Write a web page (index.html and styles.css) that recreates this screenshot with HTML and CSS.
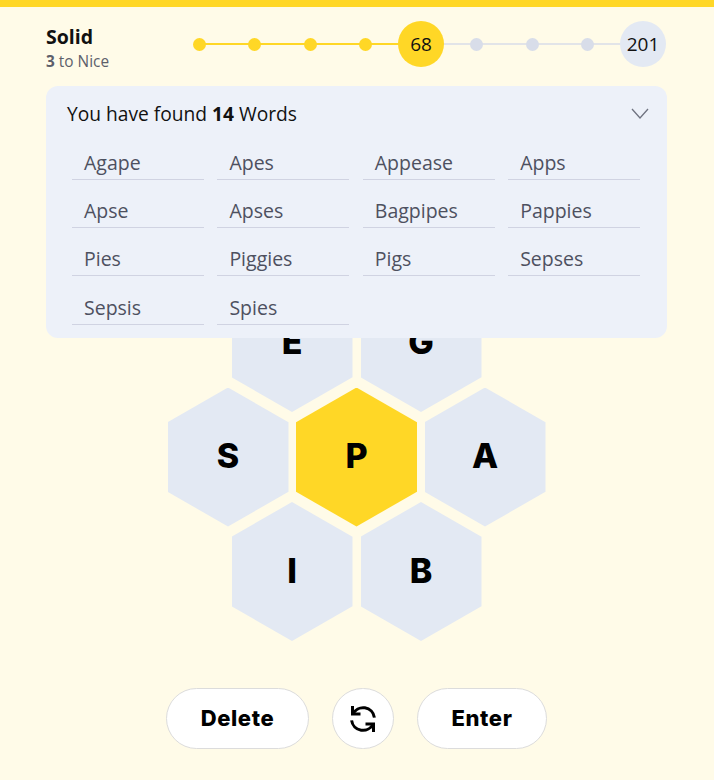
FILE: index.html
```html
<!DOCTYPE html>
<html lang="en">
<head>
    <meta charset="UTF-8">
    <meta name="viewport" content="width=device-width, initial-scale=1.0">
    <title>Spelling Bee</title>
    <link rel="stylesheet" href="styles.css">
</head>
<body>
    <div class="top-bar"></div>
    <main class="game">
        <header class="status">
            <div class="rank">
                <div class="rank-name">Solid</div>
                <div class="rank-next"><b>3</b> to Nice</div>
            </div>
            <div class="progress">
                <span class="track"></span>
                <span class="track done"></span>
                <span class="step"><span class="dot done"></span></span>
                <span class="step"><span class="dot done"></span></span>
                <span class="step"><span class="dot done"></span></span>
                <span class="step"><span class="dot done"></span></span>
                <span class="step score current">68</span>
                <span class="step"><span class="dot"></span></span>
                <span class="step"><span class="dot"></span></span>
                <span class="step"><span class="dot"></span></span>
                <span class="step score">201</span>
            </div>
        </header>

        <!-- Found words panel sits over the top of the hive -->
        <section class="found">
            <div class="found-head">
                <span>You have found <b>14</b> Words</span>
                <svg class="chevron" viewBox="0 0 18 12" width="18" height="12">
                    <polyline points="1,1 9,10 17,1" fill="none" stroke="#6f7380" stroke-width="1.3"/>
                </svg>
            </div>
            <ul class="words">
                <li>Agape</li>
                <li>Apes</li>
                <li>Appease</li>
                <li>Apps</li>
                <li>Apse</li>
                <li>Apses</li>
                <li>Bagpipes</li>
                <li>Pappies</li>
                <li>Pies</li>
                <li>Piggies</li>
                <li>Pigs</li>
                <li>Sepses</li>
                <li>Sepsis</li>
                <li>Spies</li>
            </ul>
        </section>

        <div class="hive">
            <div class="hive-row">
                <div class="hex">E</div>
                <div class="hex">G</div>
            </div>
            <div class="hive-row middle">
                <div class="hex">S</div>
                <div class="hex center">P</div>
                <div class="hex">A</div>
            </div>
            <div class="hive-row">
                <div class="hex">I</div>
                <div class="hex">B</div>
            </div>
        </div>

        <div class="actions">
            <button class="btn delete">Delete</button>
            <button class="btn shuffle" aria-label="Shuffle">
                <svg viewBox="0 0 28 28" width="28" height="28" fill="none" stroke="#000" stroke-width="3">
                    <polyline points="3.5,1 3.5,9 11.5,9"/>
                    <polyline points="24.5,27 24.5,19 16.5,19"/>
                    <path d="M3.8 9.2A11.4 11.4 0 0 1 25.4 12.6"/>
                    <path d="M24.2 18.8A11.4 11.4 0 0 1 2.6 15.4"/>
                </svg>
            </button>
            <button class="btn enter">Enter</button>
        </div>
    </main>
</body>
</html>
```

FILE: styles.css
```css
body { margin: 0; background-color: #fffbe8; color: #111; font-family: "Open Sans", "Noto Sans", sans-serif; }
.top-bar { height: 7px; background-color: #ffd726; }
.game { position: relative; width: 621px; margin-left: 46px; }

/* Rank and progress */
.status { display: flex; align-items: flex-start; height: 79px; padding-top: 14px; box-sizing: border-box; }
.rank { width: 130px; }
.rank-name { font-size: 19.5px; font-weight: 700; line-height: 24px; margin-top: 4px; }
.rank-next { font-size: 15.4px; line-height: 20px; color: #5d5f6b; margin-top: 3px; }
.progress { position: relative; display: flex; justify-content: space-between; width: 490px; height: 46px; }
.track { position: absolute; left: 23px; right: 23px; top: 22px; height: 2px; background-color: #e2e4e8; }
.track.done { right: 50%; background-color: #ffd726; }
.step { position: relative; width: 46px; height: 46px; flex: none; display: flex; align-items: center; justify-content: center; }
.dot { width: 13px; height: 13px; border-radius: 50%; background-color: #d8dde9; }
.score { border-radius: 50%; background-color: #e3e9f3; font-size: 19px; }
.dot.done, .score.current { background-color: #ffd726; }

/* Found words */
.found { position: absolute; z-index: 1; top: 79px; left: 0; width: 621px; height: 252px; box-sizing: border-box; padding: 16px 26px 0; background-color: #edf1f9; border-radius: 12px; }
.found-head { display: flex; justify-content: space-between; align-items: center; font-size: 19.2px; line-height: 24px; margin-left: -5px; }
.chevron { margin-right: -8px; }
.words { list-style: none; margin: 11px 0 0; padding: 0; display: grid; grid-template-columns: repeat(4, 132px); column-gap: 13.4px; }
.words li { height: 48.2px; box-sizing: border-box; padding: 13px 0 0 12px; font-size: 19.5px; line-height: 26px; color: #4d5060; position: relative; }
.words li::after { content: ""; position: absolute; left: 0; right: 0; top: 42px; height: 1px; background-color: #d0d3e2; }

/* Hive */
.hive { display: flex; flex-direction: column; align-items: center; margin-top: 187px; }
.hive-row { display: flex; gap: 8px; }
.hive-row.middle { gap: 7.5px; }
.hive-row + .hive-row { margin-top: -24.5px; }
.hex { width: 121px; height: 139px; box-sizing: border-box; padding-bottom: 3px; clip-path: polygon(50% 0, 100% 25%, 100% 75%, 50% 100%, 0 75%, 0 25%); background-color: #e3e9f3; display: flex; align-items: center; justify-content: center; font-family: Inter, sans-serif; font-size: 34px; font-weight: 800; color: #000; }
.hex.center { background-color: #ffd726; }

/* Buttons */
.actions { display: flex; justify-content: center; gap: 23px; margin-top: 47px; }
.btn { height: 61px; border: 1px solid #dcdcdc; border-radius: 31px; background-color: #fff; color: #000; font-family: Inter, sans-serif; font-size: 22px; font-weight: 800; letter-spacing: 0.6px; padding: 0 0 2px; display: flex; align-items: center; justify-content: center; }
.delete { width: 143px; }
.shuffle { width: 62px; padding: 0; }
.enter { width: 130px; }
```
